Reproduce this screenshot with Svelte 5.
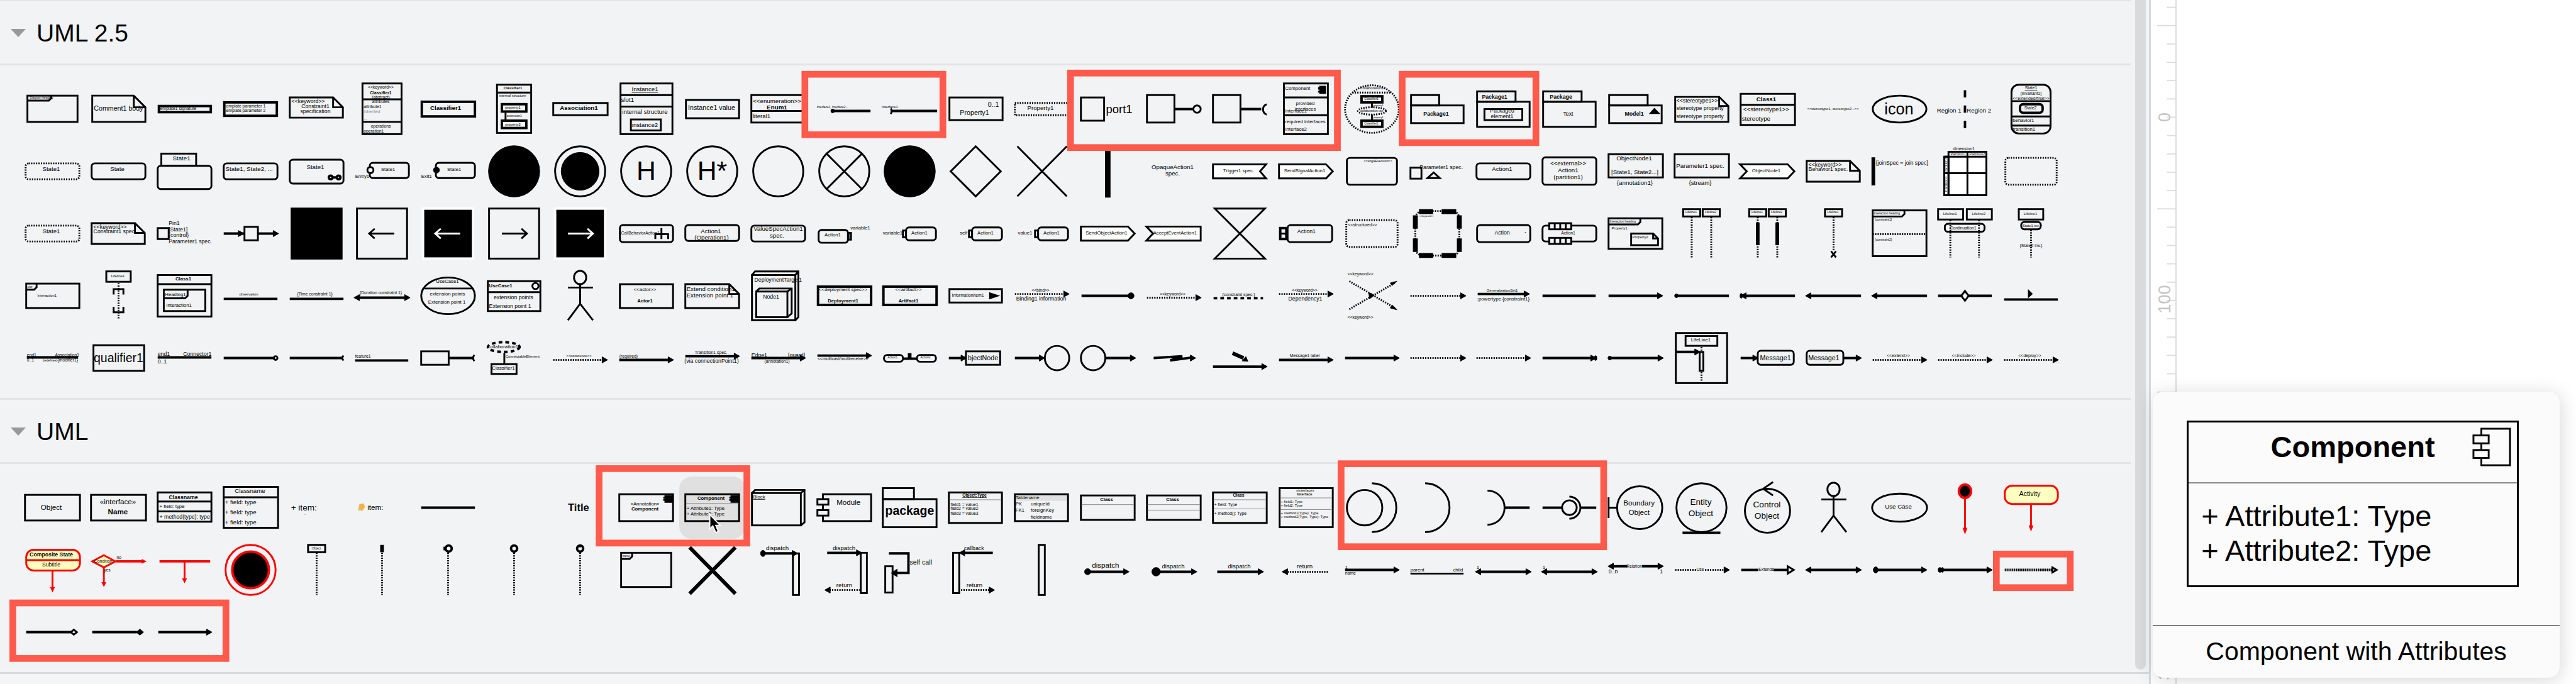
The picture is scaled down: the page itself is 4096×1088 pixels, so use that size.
<script>
  // Drawing primitives. Every shape lives on a 108 x 102 tile.
  const r = (x, y, w, h, c = '') => ({ k: 'r', x, y, w, h, c });
  const e = (x, y, rx, ry = rx, c = '') => ({ k: 'e', x, y, rx, ry, c });
  const p = (d, c = '') => ({ k: 'p', d, c });
  const t = (x, y, size, text, c = '') => ({ k: 't', x, y, size, text, c });
  const s = (x, y, size, text, c = '') => t(x, y, size, text, 'start ' + c);
  const v = (x, y, size, text) => ({ k: 'v', x, y, size, text, c: '' });

  const h = (x1, x2, y = 51, c = 'line') => p(`M${x1} ${y}H${x2}`, c);
  const d = (x, y1, y2, c = 'dash') => p(`M${x} ${y1}V${y2}`, c);
  const headR = (x, y = 51, n = 5, c = 'solid') => p(`M${x - 9} ${y - n}L${x} ${y}L${x - 9} ${y + n}Z`, c);
  const headL = (x, y = 51, n = 5, c = 'solid') => p(`M${x + 9} ${y - n}L${x} ${y}L${x + 9} ${y + n}Z`, c);
  const arrow = (y = 51, c = 'line', a = 10, b = 99) => [h(a, b - 6, y, c), headR(b, y)];
  const both = (y = 51) => [h(14, 94, y), headL(8, y), headR(100, y)];
  const note = (x, y, w, ht, f = 16) =>
    p(`M${x} ${y}H${x + w - f}L${x + w} ${y + f}V${y + ht}H${x}ZM${x + w - f} ${y}V${y + f}H${x + w}`);
  const tab = (x, y, w, b) => p(`M${x} ${b}H${w - 4}L${w} ${b - 4}V${y}`);
  const send = (text) => [p('M10 39.5H87L98 51L87 62.5H10Z', 'white'), t(52, 53, 8, text)];
  const actor = () => [e(54, 21, 10, 11), p('M54 32V64M34 37.5H75M34 91L54 64L75 91')];
  const box = (x, y, w, ht, text, size = 5) => [r(x, y, w, ht), t(x + w / 2 - 1, y + ht / 2 + 1, size, text)];
  const life = (x, text) => [...box(x, 11, 28, 12, text)];
  const ring = () => e(54, 51, 41);
  const disc = () => e(54, 51, 42, 42, 'solid');
  const arL = 'M74 51H33M42 43L33 51L42 59';
  const arR = 'M34 51H75M66 43L75 51L66 59';
  const state = (text = 'State1', c = '') => [r(10, 38, 88, 26, 'round ' + c), t(52, 50, 10, text)];

  const uml25 = [
    // row 1
    [r(13, 29, 82, 43), tab(13, 29, 52, 37), s(17, 34, 5, 'Diagram heading')],
    [note(11, 29, 87, 43, 19), t(54, 54, 11, 'Comment1 body')],
    [r(12, 46, 85, 10, 'fat'), s(14, 53, 7, 'emplate1 signature')],
    [r(11, 40, 86, 22, 'fat'), s(14, 48, 7, 'emplate parameter 1'), s(14, 56, 7, 'emplate parameter 2')],
    [note(10, 32, 87, 33), s(13, 41, 9, '<<keyword>>'), t(52, 49, 9, 'Constraint1'), t(52, 58, 9, 'specification')],
    [r(22, 9, 64, 83), p('M22 35H86M22 72H86'), t(52, 18, 7, '<<keyword>>'), t(52, 27, 7, 'Classifier1', 'bold'),
      t(52, 34, 7, '(abstract)'), t(52, 41, 7, 'attributes'), s(24, 49, 7, 'attribute1'), s(24, 58, 7, 'inherited', 'gray'),
      s(24, 68, 7, '...'), t(52, 81, 7, 'operations'), s(24, 90, 7, 'operation1')],
    [r(11, 39, 87, 24, 'fat'), t(50, 53, 10, 'Classifier1', 'bold')],
    [r(26, 11, 56, 79), h(26, 82, 24, ''), t(52, 19, 6, 'Classifier1', 'bold'), s(29, 31, 6, 'internal structure'),
      r(34, 43, 40, 12, 'fat'), t(52, 50, 6, 'property1'), d(40, 56, 69, ''), s(42, 64, 5, 'connector1'),
      r(34, 70, 40, 12, 'fat'), t(52, 78, 6, 'property2')],
    [r(10, 41, 89, 20), t(52, 53, 10, 'Association1', 'bold')],
    [r(12, 9, 85, 83), p('M12 28H97M12 47H97'), t(52, 22, 10, 'Instance1', 'under'), s(13, 39, 10, 'slot1'),
      t(52, 59, 10, 'internal structure'), r(29, 68, 49, 18), t(52, 80, 10, 'instance2')],
    [r(11, 36, 87, 30), t(53, 53, 11, 'Instance1 value')],
    [r(10, 28, 88, 45), h(10, 98, 54, ''), t(52, 41, 10, '<<enumeration>>'), t(52, 52, 10, 'Enum1', 'bold'), s(12, 66, 10, 'literal1')],
    [s(9, 49, 5, 'Interface1, Interface2...'), e(35, 54, 3, 3, 'solid'), h(34, 97, 54)],
    [s(8, 49, 6, 'Interface1'), h(23, 99, 54), p('M23 50Q26 54 23 59')],
    [r(11, 32, 87, 37), t(83, 47, 11, '0..1'), t(52, 61, 11, 'Property1')],
    [r(10, 41, 88, 20, 'dash'), t(52, 53, 10, 'Property1')],
    [r(10, 32, 38, 38), s(51, 58, 19, 'port1')],
    [r(10, 28, 45, 45), h(56, 85), e(92, 51, 6)],
    [r(10, 28, 45, 45), h(56, 89), p('M98 43A9 9 0 0 0 98 60')],
    [r(18, 9, 72, 83), p('M18 32H90M18 61H90'), s(20, 20, 8, 'Component'), p('M76 13H87V26H76V24H74V21H76V19H74V15H76Z', 'fill'),
      t(53, 44, 8, 'provided'), t(53, 54, 8, 'interfaces'), s(20, 57, 8, 'Interface1'), s(20, 74, 8, 'required interfaces'), s(20, 86, 8, 'Interface2')],
    [e(54, 51, 44, 39, 'dash'), h(22, 86, 24, 'dash'), t(54, 19, 6, 'Collaboration1'), r(37, 30, 34, 10, 'fat'), t(53, 36, 5, 'Classifier1'),
      d(54, 41, 49, ''), s(56, 46, 4, 'property1'), e(54, 54, 23, 6, 'dash'), t(54, 56, 5, 'collaboration use'), d(54, 60, 69, ''),
      s(56, 66, 4, 'property1'), r(37, 70, 34, 10, 'fat'), t(53, 76, 5, 'Classifier2')],
    [r(11, 28, 46, 17), r(11, 45, 86, 29), t(52, 62, 9, 'Package1', 'bold')],
    [r(11, 22, 63, 17), r(11, 39, 86, 41), s(19, 34, 9, 'Package1', 'bold'), r(23, 51, 62, 18), t(52, 57, 9, 'Packaged'), t(52, 66, 9, 'element1')],
    [r(11, 22, 63, 17), r(11, 39, 86, 41), s(22, 34, 9, 'Package', 'bold'), t(52, 62, 9, 'Text')],
    [r(11, 28, 63, 17), r(11, 45, 86, 29), t(52, 62, 9, 'Model1', 'bold'), p('M76 59L85 49L95 59Z', 'fill')],
    [note(11, 31, 87, 41, 15), s(13, 40, 9, '<<stereotype1>>'), s(13, 53, 9, 'stereotype property'), s(13, 66, 9, 'stereotype property')],
    [r(10, 26, 89, 51), h(10, 99, 44, ''), t(52, 38, 10, 'Class1', 'bold'), t(52, 55, 10, '<<stereotype1>>'), s(12, 70, 10, 'stereotype')],
    [t(53, 53, 6, '<<stereotype1, stereotype2...>>')],
    [e(54, 51, 44, 22), t(53, 60, 26, 'icon')],
    [s(8, 57, 10, 'Region 1'), p('M54 20V32M54 45V57M54 70V82', 'line'), s(57, 57, 10, 'Region 2')],
    [r(22, 11, 64, 80, 'pill'), p('M22 38H86M22 63H86M22 78H86'), t(54, 19, 7, 'State1', 'under'), t(54, 28, 7, '[invariant1]'),
      t(54, 36, 7, '<<extended/final>>'), r(36, 43, 37, 14, 'round fat'), t(53, 51, 7, 'State2'), s(24, 72, 8, 'behavior1'), s(24, 87, 8, 'transition1')],

    // row 2
    state('State1', 'dash'),
    state('State'),
    [r(16, 22, 57, 20), t(49, 33, 10, 'State1'), r(10, 42, 88, 38, 'round tile')],
    [r(10, 38, 88, 26, 'round'), s(13, 50, 10, 'State1, State2, ...')],
    [r(10, 32, 88, 39, 'round'), t(52, 47, 10, 'State1'), e(77, 61, 3, 3, 'line'), e(90, 61, 3, 3, 'line'), h(80, 87, 61)],
    [s(10, 62, 8, 'Entry1'), r(34, 37, 64, 25, 'round'), e(35, 49, 5, 5, 'tile'), t(64, 50, 8, 'State1')],
    [s(10, 62, 8, 'Exit1'), r(34, 37, 64, 25, 'round'), e(35, 49, 5, 5, 'solid'), t(64, 50, 8, 'State1')],
    [disc()],
    [ring(), e(54, 51, 31, 31, 'solid')],
    [ring(), t(54, 65, 44, 'H')],
    [ring(), t(54, 65, 44, 'H*')],
    [ring()],
    [ring(), p('M25 22L83 80M83 22L25 80')],
    [disc()],
    [p('M54 10L95 51L54 92L13 51Z')],
    [p('M14 10L95 92M95 10L14 92')],
    [p('M54 8V94', 'bar')],
    [t(52, 47, 10, 'OpaqueAction1'), t(52, 58, 10, 'spec.')],
    [p('M10 39.5H97L87 51L97 62.5H10Z', 'white'), t(52, 53, 8, 'Trigger1 spec.')],
    send('SendSignalAction1'),
    [r(13, 29, 82, 44, 'round'), t(64, 36, 5, '<<singleExecution>>')],
    [r(10, 45, 18, 18), s(25, 47, 9, 'Parameter1 spec.'), p('M38 62L48 53L58 62Z')],
    state('Action1'),
    [r(10, 28, 88, 45, 'round'), t(52, 41, 10, '<<external>>'), t(52, 53, 10, 'Action1'), t(52, 64, 10, '(partition1)')],
    [r(10, 23, 89, 38), t(52, 33, 10, 'ObjectNode1'), t(53, 56, 10, '[State1, State2...]'), t(53, 73, 10, '{annotation1}')],
    [r(10, 23, 89, 38), t(52, 45, 10, 'Parameter1 spec.'), t(52, 73, 10, '{stream}')],
    [p('M9 39.5H87L98 51L87 62.5H9L20 51Z', 'white'), t(52, 53, 8, 'ObjectNode1')],
    [note(10, 34, 87, 34), s(13, 43, 9, '<<keyword>>'), s(13, 50, 9, 'Behavior1 spec.')],
    [p('M11 28V74', 'thick'), s(15, 40, 9, '{joinSpec = join spec}')],
    [t(52, 16, 7, 'dimension1'), r(20, 27, 69, 63, 'white'), r(27, 19, 62, 71, 'white'), p('M20 54H89M20 27H89M58 19V90M27 27V90'),
      t(43, 25, 6, 'Partition1'), t(74, 25, 6, 'Partition2'), v(25, 41, 6, 'Partition3'), v(25, 72, 6, 'Partition4')],
    [r(12, 29, 84, 44, 'round dash')],

    // row 3
    state('State1', 'dash'),
    [note(10, 34, 87, 34), s(13, 43, 9, '<<keyword>>'), s(13, 50, 9, 'Constraint1 spec.')],
    [r(10, 42, 18, 18), s(28, 37, 9, 'Pin1'), s(28, 47, 9, '[State1]'), s(28, 57, 9, '{control}'), s(28, 67, 9, 'Parameter1 spec.')],
    [h(10, 43), headR(43), r(44, 40, 22, 22), h(67, 93), headR(100)],
    [r(13, 10, 82, 82, 'solid')],
    [r(13, 10, 82, 82), p(arL)],
    [r(13, 10, 82, 82, 'invert'), p(arL, 'light')],
    [r(13, 10, 82, 82), p(arR)],
    [r(13, 10, 82, 82, 'invert'), p(arR, 'light')],
    [r(11, 37, 87, 28, 'round'), s(13, 53, 7, 'CallBehaviorAction1'), p('M69 60V52H90V60M79 42V60')],
    [r(10, 37, 88, 26, 'round'), t(52, 50, 10, 'Action1'), t(53, 61, 10, '(Operation1)')],
    [r(10, 38, 88, 26, 'round'), t(54, 46, 10, 'ValueSpecAction1'), t(52, 58, 10, 'spec.')],
    [r(12, 45, 48, 21, 'round'), r(61, 50, 4, 11), t(35, 56, 8, 'Action1'), s(64, 44, 8, 'variable1')],
    [s(10, 53, 8, 'variable1'), r(43, 46, 5, 11), r(48, 41, 49, 21, 'round'), t(70, 53, 8, 'Action1')],
    [s(28, 53, 8, 'self'), r(43, 46, 5, 11), r(48, 41, 49, 21, 'round'), t(70, 53, 8, 'Action1')],
    [s(15, 53, 8, 'value1'), r(43, 46, 5, 11), r(48, 41, 49, 21, 'round'), t(70, 53, 8, 'Action1')],
    send('SendObjectAction1'),
    [p('M9 39.5H98V62.5H9L20 51Z', 'white'), t(56, 53, 8, 'AcceptEventAction1')],
    [p('M13 10H95L13 92H95Z')],
    [r(12, 42, 10, 18, 'fat'), h(12, 22, 51, ''), r(24, 37, 73, 28, 'round tile'), t(55, 50, 9, 'Action1')],
    [r(12, 29, 84, 44, 'round dash'), s(15, 39, 7, '<<structured>>')],
    [r(18, 14, 72, 73, 'pill dash'), p('M24 15H47M61 15H85M24 87H47M61 87H85M18 21V43M90 21V43M18 59V81M90 59V81', 'block'), s(24, 24, 4, '<<keyword>>')],
    [r(11, 37, 87, 28, 'round'), t(52, 53, 9, 'Action'), t(90, 53, 6, '*')],
    [r(10, 38, 88, 26, 'round'), t(52, 53, 7, 'Action1'), r(21, 34, 36, 10, 'tile'), p('M30 34V44M39 34V44M48 34V44'), r(21, 58, 36, 10, 'tile'), p('M30 58V68M39 58V68M48 58V68')],
    [r(10, 26, 88, 50), tab(10, 26, 62, 36), s(12, 33, 5, 'Interaction heading'), s(15, 44, 6, 'Property1'), note(47, 51, 44, 19, 8), s(49, 59, 6, 'Property2')],
    [...life(24, 'Lifeline1'), ...life(56, 'Lifeline2'), d(38, 24, 91), d(70, 24, 91)],
    [...life(24, 'Lifeline1'), ...life(56, 'Lifeline2'), d(38, 24, 91), d(70, 24, 91), p('M38 33V70M70 33V70', 'thick')],
    [...life(40, 'Lifeline1'), d(54, 24, 80), p('M50 80L58 90M58 80L50 90')],
    [r(10, 13, 88, 75), tab(10, 13, 62, 23), s(12, 20, 5, 'Interaction heading'), s(14, 30, 5, '[constraint1]'), h(10, 98, 52, 'dash'), s(14, 63, 5, '[constraint2]')],
    [...box(10, 11, 41, 17, 'Lifeline1', 6), ...box(57, 11, 41, 17, 'Lifeline2', 6), d(30, 29, 90), d(77, 29, 90), r(21, 35, 65, 13, 'round'), t(51, 44, 7, 'Continuation1')],
    [...box(34, 11, 40, 17, 'Lifeline1', 6), r(38, 32, 32, 12, 'round'), t(54, 40, 6, 'State1 inv.'), d(54, 45, 90), t(54, 73, 7, '{State2 inv.}')],

    // row 4
    [r(11, 31, 87, 40), tab(11, 31, 28, 41), s(13, 38, 5, 'ster'), t(45, 53, 6, 'Interaction1')],
    [...box(34, 11, 40, 17, 'Lifeline1', 6), d(54, 30, 90), p('M46 49V40H62V49M46 69V78H62V69')],
    [r(10, 17, 88, 68), h(10, 98, 32, ''), t(52, 26, 8, 'Class1', 'bold'), r(20, 41, 68, 35), tab(20, 41, 59, 55), s(22, 51, 8, 'Heading1'), s(24, 69, 8, 'Interaction1')],
    [h(10, 98, 56), t(51, 50, 6, 'observation')],
    [h(10, 98, 56), t(51, 50, 7, '{Time constraint 1}')],
    [...both(54), t(52, 48, 7, '{Duration constraint 1}')],
    [e(54, 51, 44, 30), h(15, 93, 39, ''), t(53, 30, 8, 'UseCase1'), t(53, 50, 8, 'extension points'), t(52, 64, 8, 'Extension point 1')],
    [r(11, 27, 86, 49), h(11, 97, 45, ''), s(13, 37, 8, 'UseCase1', 'bold'), e(89, 35, 5), t(53, 57, 9, 'extension points'), s(13, 71, 9, 'Extension point 1')],
    actor(),
    [r(11, 32, 87, 39), t(52, 43, 8, '<<actor>>'), t(52, 62, 8, 'Actor1', 'bold')],
    [note(10, 32, 88, 39), s(12, 43, 10, 'Extend condition1'), s(12, 54, 10, 'Extension point 1')],
    [r(11, 17, 71, 74), p('M11 17L16 11H87V86L82 91M82 17L87 11'), r(18, 44, 51, 42), p('M18 44L23 39H76V80L69 86M69 44L76 39'), s(15, 28, 9, 'DeploymentTarget1'), s(29, 56, 9, 'Node1')],
    [r(11, 36, 87, 30, 'fat'), t(52, 43, 8, '<<deployment spec>>'), t(52, 62, 8, 'Deployment1', 'bold')],
    [r(11, 36, 87, 30, 'fat'), t(52, 43, 8, '<<artifact>>'), t(52, 62, 8, 'Artifact1', 'bold')],
    [r(11, 40, 86, 22), s(15, 53, 7, 'InformationItem1'), p('M76 45L94 51L76 57Z', 'fill')],
    [t(52, 44, 7, '<<bind>>'), ...arrow(48, 'dash'), t(53, 59, 9, 'Binding1 information')],
    [h(11, 88), e(92, 51, 5, 5, 'solid')],
    [t(52, 50, 7, '<<keyword>>'), ...arrow(54, 'dash')],
    [t(52, 51, 7, '{constraint spec.}'), h(11, 92, 55, 'coarse')],
    [t(52, 44, 7, '<<keyword>>'), ...arrow(48, 'dash'), t(53, 59, 9, 'Dependency1')],
    [s(14, 17, 7, '<<keyword>>'), p('M17 27L93 72M17 73L93 29', 'dash'), p('M87 66L95 74L84 71ZM87 34L95 27L84 30ZM49 46L58 50L50 56Z', 'solid'), s(14, 89, 7, '<<keyword>>')],
    [h(10, 92, 51, 'dash'), headR(101)],
    [t(52, 44, 6, 'GeneralizationSet1'), ...arrow(48, 'line', 12, 97), t(54, 59, 8, ':powertype {constraint1}')],
    [h(10, 97)],
    [...arrow()],
    [h(12, 99), e(13, 51, 3, 3, 'solid')],
    [h(12, 99), e(11, 51, 2, 4, 'solid'), headL(10)],
    [h(16, 99), headL(8)],
    [h(16, 99), headL(8)],
    [h(10, 98), p('M54 43L60 51L54 59L48 51Z', 'tile')],
    [h(10, 98, 57), p('M49 40L57 48L49 55Z', 'fill')],

    // row 5
    [h(12, 96, 50), s(12, 48, 7, 'end1'), t(78, 48, 7, 'Association1'), s(12, 57, 7, '0..1'), s(38, 57, 5, '{redefines}'), t(79, 57, 7, '{modifier1}')],
    [r(13, 30, 83, 42), t(54, 58, 20, 'qualifier1')],
    [h(10, 98, 50), s(10, 47, 9, 'end1'), t(75, 47, 9, 'Connector1'), s(10, 60, 9, '0..1')],
    [h(10, 94), e(95, 51, 3)],
    [h(10, 97), p('M98 47Q94 51 98 55')],
    [s(10, 50, 7, 'feature1'), h(10, 97, 55)],
    [r(10, 40, 45, 22), h(56, 96), p('M97 46Q93 51 97 56')],
    [e(37, 33, 26, 8, 'coarse'), t(35, 35, 8, 'Collaboration1'), d(38, 43, 60, ''), ...box(17, 61, 41, 16, 'Classifier1', 8), s(40, 50, 6, 'ConnectableElement')],
    [t(52, 49, 6, '<<occurence>>'), ...arrow(54, 'dash')],
    [s(10, 50, 7, '{required}'), ...arrow(54)],
    [t(52, 44, 7, 'Transition1 spec.'), ...arrow(48), t(53, 59, 9, '(via connectionPoint1)')],
    [s(10, 49, 9, 'Edge1'), t(84, 49, 9, '[guard]'), ...arrow(51), t(52, 59, 7, '(annotation1)')],
    [...arrow(47), t(52, 55, 7, '<<multicast/multireceive>>')],
    [r(12, 46, 31, 11, 'round'), t(26, 52, 5, 'Action1'), r(66, 46, 31, 11, 'round'), t(80, 52, 5, 'Action2'), h(44, 65, 52), p('M54 43V52', 'thick')],
    [h(10, 36), headR(39), r(38, 40, 56, 22), t(66, 55, 11, 'bjectNode')],
    [h(10, 54), headR(59), e(79, 51, 20)],
    [e(30, 51, 20), h(50, 94), headR(100)],
    [p('M21 51L68 48L48 55L84 50', 'line'), headR(90)],
    [p('M42 43L60 51', 'thick'), p('M57 56L68 57L64 48Z', 'fill'), ...arrow(65)],
    [t(52, 49, 7, 'Message1 label'), ...arrow(54)],
    [...arrow()],
    [h(10, 92, 51, 'dash'), headR(101)],
    [...arrow(51, 'dash')],
    [h(10, 94), headR(98), e(97, 51, 2, 4, 'solid')],
    [h(12, 94), e(12, 51, 3, 3, 'solid'), headR(100)],
    [r(12, 10, 84, 82), ...box(28, 15, 52, 16, 'LifeLine1', 8), d(54, 33, 39), h(13, 48, 41), headR(52, 41), r(51, 41, 6, 31), d(54, 74, 88)],
    [h(10, 34), headR(39), r(38, 39, 59, 23, 'round'), t(67, 55, 11, 'Message1')],
    [r(10, 39, 60, 23, 'round'), t(38, 55, 11, 'Message1'), h(70, 94), headR(100)],
    [t(52, 49, 7, '<<extend>>'), ...arrow(54, 'dash')],
    [t(52, 49, 7, '<<include>>'), ...arrow(54, 'dash')],
    [t(52, 49, 7, '<<deploy>>'), ...arrow(54, 'dash')],
  ];

  const field = '+ field: type';
  const badge = p('M84 31H97V43H84V40H82V37H84V36H82V33H84Z', 'fill');
  const uml = [
    // row 1
    [r(9, 30, 90, 42), t(52, 55, 12, 'Object')],
    [r(9, 30, 90, 42), t(53, 45, 12, '«interface»'), t(53, 62, 12, 'Name', 'bold')],
    [r(10, 26, 88, 48), p('M10 41H98M10 57H98'), t(52, 37, 9, 'Classname', 'bold'), s(13, 51, 8, field), s(13, 69, 9, '+ method(type): type')],
    [r(10, 17, 89, 67), h(10, 99, 34, ''), t(53, 27, 10, 'Classname'), s(12, 45, 10, field), s(12, 62, 10, field), s(12, 78, 10, field)],
    [s(12, 56, 14, '+ item:'), t(35, 63, 6, '..')],
    [p('M17 45L24 44L26 50L22 56L15 55L16 50Z', 'orange'), s(30, 55, 12, 'item:')],
    [h(10, 98)],
    [],
    [s(34, 57, 17, 'Title', 'bold')],
    [r(10, 29, 88, 44), t(52, 47, 8, '«Annotation»'), t(52, 56, 8, 'Component', 'bold'), badge],
    [r(10, 29, 88, 44), badge, t(52, 38, 8, 'Component', 'bold'), h(11, 97, 44, 'rule'), s(12, 55, 8, '+ Attribute1: Type'), s(12, 64, 8, '+ Attribute2: Type')],
    [r(11, 27, 80, 53), p('M11 27L16 22H97V75L91 80M91 27L97 22'), s(13, 36, 8, 'Block', 'under')],
    [r(19, 29, 79, 44), r(10, 37, 18, 9, 'tile'), r(10, 55, 18, 9, 'tile'), t(61, 46, 12, 'Module')],
    [r(10, 19, 51, 18), r(10, 37, 88, 46), t(54, 63, 20, 'package', 'bold')],
    [r(10, 26, 87, 50), t(52, 33, 7, 'Object:Type', 'bold under'), h(11, 96, 38, 'rule'), s(13, 48, 7, 'field1 = value1'), s(13, 55, 7, 'field2 = value2'), s(13, 63, 7, 'field3 = value3')],
    [p('M10 29H97V40H10Z', 'shade'), r(10, 29, 87, 44), s(11, 37, 8, 'Tablename'), s(11, 47, 8, 'PK'), s(36, 47, 8, 'uniqueId'), s(11, 58, 8, 'FK1'), s(36, 58, 8, 'foreignKey'), s(36, 69, 8, 'fieldname')],
    [r(10, 31, 88, 40), t(52, 40, 8, 'Class', 'bold'), h(11, 97, 46, 'rule')],
    [r(10, 31, 88, 40), t(52, 40, 8, 'Class', 'bold'), h(11, 97, 46, 'rule'), h(11, 97, 55, 'rule')],
    [r(10, 26, 88, 50), t(52, 33, 7, 'Class', 'bold'), h(11, 97, 38, 'rule'), s(12, 48, 7, '+ field: Type'), h(11, 97, 53, 'rule'), s(12, 63, 7, '+ method(): Type')],
    [r(11, 19, 87, 64), t(53, 25, 6, '«interface»'), t(52, 31, 6, 'Interface', 'bold'), h(12, 97, 35, 'rule'), s(13, 43, 6, '+ field1: Type'), s(13, 49, 6, '+ field2: Type'),
      h(12, 97, 54, 'rule'), s(13, 62, 6, '+ method1(Type): Type'), s(13, 68, 6, '+ method2(Type, Type): Type')],
    [e(42, 51, 29), p('M54 11A40 40 0 0 1 54 91')],
    [p('M34 11A40 40 0 0 1 34 91')],
    [p('M28 23A28 28 0 0 1 28 79'), h(56, 97)],
    [h(10, 41), e(54, 51, 12), p('M54 33A18 18 0 0 1 54 69'), h(72, 98)],
    [e(61, 51, 37, 35), p('M10 34V68M10 51H24'), t(60, 47, 12, 'Boundary'), t(60, 63, 12, 'Object')],
    [e(54, 51, 41, 40), h(23, 85, 92), t(53, 46, 14, 'Entity'), t(53, 65, 14, 'Object')],
    [e(54, 56, 37, 36), p('M63 9L47 20L63 31'), t(53, 50, 14, 'Control'), t(53, 69, 14, 'Object')],
    actor(),
    [e(54, 51, 45, 23), t(52, 53, 10, 'Use Case')],
    [e(54, 24, 10, 11, 'red core'), p('M54 37V85', 'red'), p('M50 84H58L54 95Z', 'redfill')],
    [r(11, 15, 87, 30, 'pill red yellow'), t(52, 32, 11, 'Activity'), p('M54 45V82', 'red'), p('M50 80H58L54 90Z', 'redfill')],

    // row 2
    [r(11, 18, 88, 34, 'pill red yellow'), h(11, 99, 35, 'red'), t(52, 29, 9, 'Composite State', 'bold'), t(52, 45, 9, 'Subtitle'), p('M54 52V80', 'red'), p('M50 79H58L54 88Z', 'redfill')],
    [p('M30 27L49 37L30 47L11 37Z', 'red yellow'), t(29, 39, 7, 'Condition'), h(50, 94, 37, 'red fat'), p('M92 33L100 37L92 41Z', 'redfill'), s(51, 33, 7, 'no'), p('M30 48V72', 'red'), p('M26 71H34L30 79Z', 'redfill'), s(30, 54, 7, 'yes')],
    [h(13, 96, 37, 'red fat'), p('M54 38V66', 'red'), p('M50 65H58L54 73Z', 'redfill')],
    [e(54, 51, 41, 41, 'red'), e(54, 51, 30, 30, 'red core')],
    [...box(40, 10, 28, 12, ':Object'), d(54, 23, 92)],
    [p('M54 10V22', 'thick'), d(54, 23, 92)],
    [e(55, 16, 5, 5, 'line'), p('M48 13V19'), d(54, 23, 92)],
    [e(54, 16, 5, 5, 'line'), d(54, 23, 92)],
    [e(54, 16, 5, 5, 'line'), p('M54 10V14'), d(54, 23, 92)],
    [r(13, 23, 82, 56), tab(13, 23, 31, 33), s(15, 30, 5, 'frame')],
    [p('M17 14L92 90M92 14L17 90', 'thick')],
    [s(34, 19, 10, 'dispatch'), e(29, 24, 4, 5, 'solid'), h(30, 78, 24), headR(86, 24), r(78, 24, 10, 68)],
    [s(35, 19, 10, 'dispatch'), h(26, 76, 23), headR(83, 23), r(81, 23, 10, 66), s(41, 79, 10, 'return'), h(30, 79, 84, 'dash'), headL(22, 84)],
    [p('M20 24H52V56H32', 'line'), p('M34 49L23 56L34 63Z', 'fill'), r(14, 45, 12, 43), s(54, 42, 11, 'self call')],
    [s(35, 19, 9, 'callback'), h(34, 82, 23), headL(27, 23), r(17, 23, 10, 66), s(39, 79, 10, 'return'), h(30, 77, 84, 'dash'), headR(85, 84)],
    [r(49, 10, 10, 82)],
    [s(28, 47, 12, 'dispatch'), e(21, 54, 5, 5, 'solid'), h(21, 82, 54), headR(89, 54)],
    [t(53, 48, 10, 'dispatch'), e(25, 54, 7, 7, 'solid'), h(25, 84, 54), headR(92, 54)],
    [t(53, 48, 10, 'dispatch'), h(17, 85, 54), headR(93, 54)],
    [t(52, 48, 10, 'return'), headL(15, 54), h(24, 90, 54, 'dash')],
    [s(10, 49, 8, '1'), ...arrow(51), s(10, 59, 7, 'name')],
    [s(10, 54, 8, 'parent'), t(88, 54, 8, 'child'), h(10, 97, 57, '')],
    [s(10, 49, 8, '1'), ...both(54)],
    [s(10, 49, 8, '1'), ...both(54)],
    [h(14, 41, 45), h(65, 94, 45), headL(9, 45), headR(100, 45), t(52, 47, 7, 'Relation'), s(10, 57, 9, '0..n'), s(94, 57, 9, '1')],
    [h(11, 45, 51, 'dash'), h(60, 92, 51, 'dash'), headR(100), t(52, 53, 7, 'Use')],
    [h(11, 39), h(64, 86), p('M87 45L97 51L87 57Z', 'tile'), t(52, 53, 7, 'Extends')],
    [...both()],
    [e(15, 51, 4, 5, 'solid'), h(14, 94), headR(99)],
    [e(13, 51, 3, 4, 'solid'), e(17, 51, 2, 4, 'solid'), h(14, 94), headR(99)],
    [h(11, 88, 51, 'fine'), p('M89 47L96 51L89 55Z', 'tile')],

    // row 3
    [h(11, 84), p('M89 47L94 51L89 55L84 51Z', 'tile')],
    [h(11, 84), p('M89 46L95 51L89 56L83 51Z', 'solid')],
    [...arrow(51, 'line', 11, 99)],
  ];

  const sections = [
    {
      title: 'UML 2.5', rows: 5, shapes: uml25,
      marks: [[1286, -6, 226, 99], [1721, -8, 437, 122], [2264, -6, 219, 112]],
    },
    {
      title: 'UML', rows: 3, shapes: uml, hover: 10,
      marks: [[949, -13, 242, 122], [2164, -21, 430, 136], [3237, 127, 121, 55], [-11, 207, 349, 91]],
    },
  ];

  const nameOf = (shape) => shape.find((q) => q.text)?.text ?? 'Connector or shape';
  const ticks = Array.from({ length: 38 }, (_, i) => 12 + i * 30);
  const labels = [[192, '0'], [490, '100'], [790, '200'], [1090, '300']];
</script>

<main>
  <aside>
    <div class="scroller">
      <div class="sections">
        {#each sections as sec}
          <section>
            <h2>
              <button class="toggle" aria-expanded="true">
                <svg class="caret" viewBox="0 0 24 13" aria-hidden="true"><path d="M0 0H24L12 13Z" /></svg>
                {sec.title}
              </button>
            </h2>
            <div class="body">
              <div class="tiles">
                {#each sec.shapes as shape, i}
                  <button class="tile-btn" class:hovered={i === sec.hover} aria-label={nameOf(shape)}>
                    <svg viewBox="0 0 108 102" aria-hidden="true">
                      {#each shape as q}
                        {#if q.k === 'r'}
                          <rect x={q.x} y={q.y} width={q.w} height={q.h} class={q.c} />
                        {:else if q.k === 'e'}
                          <ellipse cx={q.x} cy={q.y} rx={q.rx} ry={q.ry} class={q.c} />
                        {:else if q.k === 'p'}
                          <path d={q.d} class={q.c} />
                        {:else if q.k === 'v'}
                          <text x={q.x} y={q.y} font-size={q.size} transform="rotate(-90 {q.x} {q.y})">{q.text}</text>
                        {:else}
                          <text x={q.x} y={q.y} font-size={q.size} class={q.c}>{q.text}</text>
                        {/if}
                      {/each}
                      {#if i === sec.hover}
                        <path class="cursor" d="M50 62V86L55 81L60 92L64 90L60 80H67Z" />
                      {/if}
                    </svg>
                  </button>
                {/each}
                <svg class="marks" viewBox="0 0 3348 {sec.rows * 102}" aria-hidden="true">
                  {#each sec.marks as [x, y, w, ht]}
                    <rect {x} {y} width={w} height={ht} />
                  {/each}
                </svg>
              </div>
            </div>
          </section>
        {/each}
      </div>
      <div class="bar-track"><div class="thumb"></div></div>
    </div>
  </aside>

  <div class="canvas">
    <svg class="ruler" viewBox="0 0 40 1120" preserveAspectRatio="xMaxYMin meet" aria-hidden="true">
      {#each ticks as y, i}
        <path d="M{i % 10 === 1 ? 10 : 26} {y}H40" />
      {/each}
      {#each labels as [y, text]}
        <text x="32" {y} transform="rotate(-90 32 {y})">{text}</text>
      {/each}
    </svg>

    <div class="preview" role="tooltip">
      <div class="stage">
        <div class="component">
          <div class="head">
            <strong>Component</strong>
            <svg viewBox="0 0 64 64" aria-hidden="true">
              <rect x="15" y="2" width="47" height="60" />
              <rect x="2" y="13" width="25" height="13" />
              <rect x="2" y="37" width="25" height="13" />
            </svg>
          </div>
          <div class="attrs">
            <div>+ Attribute1: Type</div>
            <div>+ Attribute2: Type</div>
          </div>
        </div>
      </div>
      <div class="caption">Component with Attributes</div>
    </div>
  </div>
</main>

<style>
  :global(body) {
    margin: 0;
    background: #fff;
  }
  main {
    display: grid;
    grid-template-columns: 83.5% 1fr;
    min-height: 100vh;
    overflow: hidden;
    font-family: 'Liberation Sans', Arial, Helvetica, sans-serif;
    color: #000;
  }
  aside {
    border-right: 3px solid #d9dadf;
    background: #f4f5f7;
  }
  .scroller {
    display: flex;
    gap: 7px;
    padding-right: 5px;
    border-bottom: 3px solid #d9dadc;
    background: #f1f3f5;
  }
  .sections {
    flex: 1;
    min-width: 0;
  }
  section {
    border-top: 3px solid #e3e4e6;
  }
  section:first-child {
    border-top-width: 2px;
  }
  h2 {
    margin: 0;
    border-bottom: 3px solid #e3e4e6;
    font-size: 39px;
    font-weight: 400;
  }
  .toggle {
    display: flex;
    align-items: center;
    gap: 17px;
    width: 100%;
    height: 99px;
    padding: 2px 17px 0;
    border: 0;
    background: none;
    color: inherit;
    font: inherit;
  }
  .caret {
    width: 24px;
    height: 13px;
    fill: #999;
  }
  .body {
    padding: 20px 106px 14px 31px;
  }
  .tiles {
    position: relative;
    display: grid;
    grid-template-columns: repeat(31, minmax(0, 1fr));
  }
  .tile-btn {
    display: block;
    padding: 0;
    border: 0;
    border-radius: 20px;
    background: none;
    font: inherit;
  }
  .tile-btn.hovered {
    background: #e0e0e0;
  }
  .tile-btn svg {
    display: block;
    width: 100%;
    overflow: visible;
  }
  .tile-btn rect,
  .tile-btn ellipse,
  .tile-btn path {
    fill: none;
    stroke: #000;
    stroke-width: 3px;
  }
  .tile-btn text {
    fill: #000;
    text-anchor: middle;
  }
  .tile-btn text.start {
    text-anchor: start;
  }
  .tile-btn text.bold {
    font-weight: 700;
  }
  .tile-btn text.under {
    text-decoration: underline;
  }
  .tile-btn text.gray {
    fill: #888;
  }
  .tile-btn .round {
    rx: 5px;
  }
  .tile-btn .pill {
    rx: 12px;
  }
  .tile-btn .fat,
  .tile-btn .line {
    stroke-width: 4px;
  }
  .tile-btn .thick {
    stroke-width: 6px;
  }
  .tile-btn .bar {
    stroke-width: 9px;
  }
  .tile-btn .block {
    stroke-width: 8px;
  }
  .tile-btn .dash {
    stroke-dasharray: 2 2;
  }
  .tile-btn .fine {
    stroke-width: 4px;
    stroke-dasharray: 2 1;
  }
  .tile-btn .coarse {
    stroke-width: 4px;
    stroke-dasharray: 6 5;
  }
  .tile-btn .rule {
    stroke: #888;
    stroke-width: 1px;
  }
  .tile-btn .solid {
    fill: #000;
    stroke-width: 1px;
  }
  .tile-btn .fill {
    fill: #000;
    stroke: none;
  }
  .tile-btn .tile {
    fill: #f1f3f5;
  }
  .tile-btn .white {
    fill: #fff;
  }
  .tile-btn .shade {
    fill: #e0e0e0;
    stroke: none;
  }
  .tile-btn .invert {
    fill: #000;
    stroke: #fff;
    stroke-width: 4px;
  }
  .tile-btn .light {
    stroke: #fff;
  }
  .tile-btn rect.solid {
    stroke-width: 3px;
  }
  .tile-btn .red {
    stroke: #f00;
  }
  .tile-btn .yellow {
    fill: #ffffc0;
  }
  .tile-btn .core {
    fill: #000;
    stroke-width: 4px;
  }
  .tile-btn .redfill {
    fill: #f00;
    stroke: none;
  }
  .tile-btn .orange {
    fill: #f0b44c;
    stroke: none;
  }
  .tile-btn .cursor {
    fill: #000;
    stroke: #fff;
    stroke-width: 2px;
  }
  .marks {
    position: absolute;
    inset: 0;
    width: 100%;
    overflow: visible;
    pointer-events: none;
  }
  .marks rect {
    fill: none;
    stroke: #ff5a4b;
    stroke-width: 11px;
  }
  .bar-track {
    display: flex;
    width: 17px;
    padding-bottom: 4px;
  }
  .thumb {
    flex: 1;
    border-radius: 0 0 9px 9px;
    background: #d8dadc;
  }
  .canvas {
    position: relative;
    background: #fff;
  }
  .ruler {
    display: block;
    width: 39px;
    height: 100vh;
    border-right: 2px solid #dcdcdc;
  }
  .ruler path {
    stroke: #dedede;
    stroke-width: 2px;
  }
  .ruler text {
    fill: #c4c4c4;
    font-size: 28px;
    text-anchor: middle;
  }
  .preview {
    position: absolute;
    right: 26px;
    bottom: 10px;
    left: 3px;
    border-radius: 18px;
    background: #fbfbfb;
    box-shadow: 2px 4px 30px rgba(0, 0, 0, 0.16);
  }
  .stage {
    padding: 46px 65px 60px 54px;
    border-bottom: 2px solid #808080;
  }
  .component {
    border: 3px solid #000;
    font-size: 47px;
    line-height: 55px;
  }
  .head {
    position: relative;
    padding: 11px 0 29px;
    border-bottom: 2px solid #888;
    text-align: center;
  }
  .head strong {
    display: block;
  }
  .head svg {
    position: absolute;
    top: 8px;
    right: 9px;
    width: 62px;
    fill: #fbfbfb;
    stroke: #000;
    stroke-width: 3px;
  }
  .attrs {
    padding: 24px 20px 28px;
  }
  .caption {
    padding: 18px 0 19px;
    font-size: 41px;
    line-height: 45px;
    text-align: center;
  }
</style>
